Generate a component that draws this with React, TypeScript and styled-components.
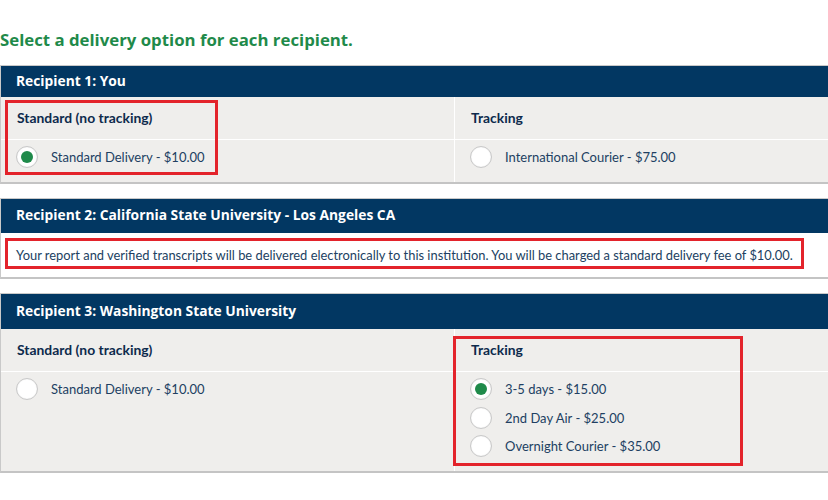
import React from "react";
import styled, { createGlobalStyle } from "styled-components";

const Global = createGlobalStyle`
  html, body { margin: 0; padding: 0; background: #ffffff; }
  body { width: 828px; overflow: hidden; }
`;

const Page = styled.div`
  width: 828px;
  padding-top: 29px;
  font-family: Lato, "Open Sans", sans-serif;
`;

const Title = styled.h1`
  margin: 0 0 15px 0;
  font-family: "Open Sans", "DejaVu Sans", sans-serif;
  font-weight: 700;
  font-size: 16.8px;
  line-height: 21px;
  color: #1f8a4a;
`;

const Card = styled.section<{ $plain?: boolean }>`
  position: relative;
  border-top: 1px solid #c9c9c9;
  border-left: 1px solid #c9c9c9;
  border-bottom: 2px solid #c4c4c4;
  margin-bottom: 14px;
  background: ${(p) => (p.$plain ? "#ffffff" : "#efeeec")};
`;

const Header = styled.div<{ $h: number }>`
  height: ${(p) => p.$h}px;
  box-sizing: border-box;
  display: flex;
  align-items: center;
  padding: 0 0 3px 15px;
  background: #023762;
  color: #ffffff;
  font-family: "Open Sans", "DejaVu Sans", sans-serif;
  font-weight: 700;
  font-size: 13.8px;
`;

const Columns = styled.div`
  display: grid;
  grid-template-columns: 453px 1fr;
`;

const Column = styled.div`
  display: grid;
  grid-template-rows: 43px auto;
  & + & {
    border-left: 1px solid #ffffff;
  }
`;

const ColHead = styled.div`
  display: flex;
  align-items: center;
  padding: 0 0 2px 16px;
  border-bottom: 1px solid #ffffff;
  font-weight: 700;
  font-size: 13.9px;
  color: #0d2a4c;
`;

const Options = styled.div`
  display: flex;
  flex-direction: column;
  gap: 6.5px;
  padding: 6px 0 14px 15px;
`;

const Option = styled.label`
  display: flex;
  align-items: center;
  gap: 13px;
  height: 22px;
  font-size: 13px;
  color: #213f62;
`;

const Radio = styled.span<{ $on?: boolean }>`
  width: 22px;
  height: 22px;
  box-sizing: border-box;
  border-radius: 50%;
  background: #ffffff;
  border: 1px solid #c8c8c8;
  box-shadow: inset 0 0 1px rgba(0,0,0,0.15);
  display: flex;
  align-items: center;
  justify-content: center;
  &::after {
    content: "";
    display: ${(p) => (p.$on ? "block" : "none")};
    width: 12px;
    height: 12px;
    border-radius: 50%;
    background: #1f8a4a;
  }
`;

const Notice = styled.div`
  height: 44px;
  display: flex;
  align-items: center;
  padding-left: 15px;
  font-size: 12.9px;
  color: #213f62;
`;

const Mark = styled.div<{ $x: number; $y: number; $w: number; $h: number }>`
  position: absolute;
  left: ${(p) => p.$x}px;
  top: ${(p) => p.$y}px;
  width: ${(p) => p.$w}px;
  height: ${(p) => p.$h}px;
  box-sizing: border-box;
  border: 3px solid #e3232b;
  pointer-events: none;
`;

type Opt = { label: string; on?: boolean };

const Col = ({ title, opts }: { title: string; opts: Opt[] }) => (
  <Column>
    <ColHead>{title}</ColHead>
    <Options>
      {opts.map((o) => (
        <Option key={o.label}>
          <Radio $on={o.on} />
          {o.label}
        </Option>
      ))}
    </Options>
  </Column>
);

export default function App() {
  return (
    <>
      <Global />
      <Page>
        <Title>Select a delivery option for each recipient.</Title>

        <Card>
          <Header $h={31}>Recipient 1: You</Header>
          <Columns>
            <Col title="Standard (no tracking)" opts={[{ label: "Standard Delivery - $10.00", on: true }]} />
            <Col title="Tracking" opts={[{ label: "International Courier - $75.00" }]} />
          </Columns>
          <Mark $x={4} $y={34} $w={213} $h={75} />
        </Card>

        <Card $plain>
          <Header $h={34}>Recipient 2: California State University - Los Angeles CA</Header>
          <Notice>
            Your report and verified transcripts will be delivered electronically to this institution. You will be charged a standard delivery fee of $10.00.
          </Notice>
          <Mark $x={4} $y={39} $w={799} $h={31} />
        </Card>

        <Card>
          <Header $h={35}>Recipient 3: Washington State University</Header>
          <Columns>
            <Col title="Standard (no tracking)" opts={[{ label: "Standard Delivery - $10.00" }]} />
            <Col
              title="Tracking"
              opts={[
                { label: "3-5 days - $15.00", on: true },
                { label: "2nd Day Air - $25.00" },
                { label: "Overnight Courier - $35.00" },
              ]}
            />
          </Columns>
          <Mark $x={452} $y={42} $w={290} $h={130} />
        </Card>
      </Page>
    </>
  );
}
